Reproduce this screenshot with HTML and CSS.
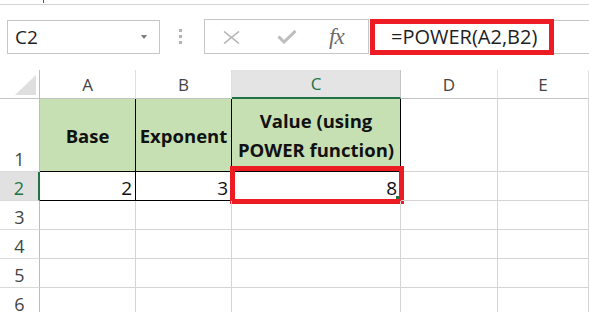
FILE: index.html
```html
<!DOCTYPE html>
<html lang="en">

<head>
    <meta charset="UTF-8">
    <meta name="viewport" content="width=device-width, initial-scale=1.0">
    <title>POWER function</title>
    <link rel="stylesheet" href="styles.css">
</head>

<body>
    <div class="app">
        <div class="top-strip"><span class="tick"></span></div>

        <div class="toolbar">
            <div class="name-box">
                <span class="name">C2</span>
                <span class="caret"></span>
            </div>
            <div class="grip"><i></i><i></i><i></i></div>
            <div class="fx-buttons">
                <svg class="btn-cancel" width="17" height="13" viewBox="0 0 17 13">
                    <path d="M1 0.5 L16 12.5 M16 0.5 L1 12.5" stroke="#b4b4b4" stroke-width="1.6" fill="none" />
                </svg>
                <svg class="btn-enter" width="20" height="14" viewBox="0 0 20 14">
                    <path d="M1.5 6.5 L7 12 L18.5 1" stroke="#bcbcbc" stroke-width="3" fill="none" />
                </svg>
                <span class="fx">fx</span>
            </div>
            <div class="formula">=POWER(A2,B2)</div>
            <div class="formula-rest"></div>
        </div>

        <div class="sheet">
            <!-- header row -->
            <div class="cell corner">
                <svg width="40" height="28" viewBox="0 0 40 28">
                    <polygon points="15,25 36,25 36,5" fill="#dfdfdf" />
                </svg>
            </div>
            <div class="cell col-head">A</div>
            <div class="cell col-head">B</div>
            <div class="cell col-head active">C</div>
            <div class="cell col-head">D</div>
            <div class="cell col-head">E</div>

            <!-- row 1 -->
            <div class="cell row-head">1</div>
            <div class="cell title boxed">Base</div>
            <div class="cell title boxed">Exponent</div>
            <div class="cell title boxed">Value (using POWER function)</div>
            <div class="cell"></div>
            <div class="cell"></div>

            <!-- row 2 -->
            <div class="cell row-head active">2</div>
            <div class="cell num boxed">2</div>
            <div class="cell num boxed">3</div>
            <div class="cell num boxed selected">8
                <span class="mark"></span>
                <span class="handle"></span>
            </div>
            <div class="cell"></div>
            <div class="cell"></div>

            <!-- rows 3-6 -->
            <div class="cell row-head">3</div>
            <div class="cell"></div>
            <div class="cell"></div>
            <div class="cell"></div>
            <div class="cell"></div>
            <div class="cell"></div>

            <div class="cell row-head">4</div>
            <div class="cell"></div>
            <div class="cell"></div>
            <div class="cell"></div>
            <div class="cell"></div>
            <div class="cell"></div>

            <div class="cell row-head">5</div>
            <div class="cell"></div>
            <div class="cell"></div>
            <div class="cell"></div>
            <div class="cell"></div>
            <div class="cell"></div>

            <div class="cell row-head">6</div>
            <div class="cell"></div>
            <div class="cell"></div>
            <div class="cell"></div>
            <div class="cell"></div>
            <div class="cell"></div>
        </div>
    </div>
</body>

</html>
```

FILE: styles.css
```css
body {
    margin: 0px;
    background-color: white;
    font-family: "Open Sans", "Noto Sans", sans-serif;
    color: #1f1f1f;
}

.app {
    width: 589px;
    height: 312px;
    overflow: hidden;
}

/* remains of the ribbon above */
.top-strip {
    height: 4px;
    border-bottom: 1px solid #d5d5d5;
    padding-left: 43px;
}

.top-strip .tick {
    display: block;
    width: 1px;
    height: 3px;
    background-color: #555;
}

/* name box + formula bar */
.toolbar {
    display: flex;
    align-items: flex-start;
    margin-top: 14px;
    height: 36px;
}

.name-box {
    display: flex;
    align-items: center;
    justify-content: space-between;
    box-sizing: border-box;
    width: 153px;
    height: 34px;
    margin-top: 1px;
    margin-left: 7px;
    padding: 0px 12px 0px 7px;
    border: 1px solid #c6c6c6;
}

.name-box .name {
    font-size: 19px;
    color: #1f1f1f;
}

.name-box .caret {
    width: 0px;
    height: 0px;
    border-left: 3px solid transparent;
    border-right: 3px solid transparent;
    border-top: 4px solid #7a7a7a;
}

.grip {
    display: flex;
    flex-direction: column;
    gap: 3px;
    margin: 10px 22px 0px 19px;
}

.grip i {
    display: block;
    width: 3px;
    height: 3px;
    background-color: #b4b4b4;
}

.fx-buttons {
    display: flex;
    align-items: center;
    box-sizing: border-box;
    width: 165px;
    height: 35px;
    border: 1px solid #c6c6c6;
    padding-left: 18px;
}

.btn-cancel {
    margin-top: 1px;
}

.btn-enter {
    margin-left: 37px;
    margin-top: 1px;
}

.fx {
    margin-left: 32px;
    font-family: "Liberation Serif", "DejaVu Serif", serif;
    font-style: italic;
    font-size: 23px;
    color: #6b6b6b;
    letter-spacing: -1px;
}

.formula {
    box-sizing: border-box;
    width: 184px;
    height: 36px;
    margin-left: 1px;
    padding-left: 16px;
    border: 5px solid #ed1c24;
    font-size: 20px;
    line-height: 25px;
    color: #1f1f1f;
    white-space: nowrap;
}

.formula-rest {
    flex: 1;
    height: 34px;
    margin-top: 1px;
    box-sizing: border-box;
    border-top: 1px solid #c6c6c6;
    border-bottom: 1px solid #c6c6c6;
}

/* grid */
.sheet {
    display: grid;
    grid-template-columns: 40px 96px 96px 169px 97px 91px;
    grid-template-rows: 29px 73px 29px 29px 29px 29px 29px;
    margin-top: 15px;
}

.cell {
    position: relative;
    box-sizing: border-box;
    border-right: 1px solid #d4d4d4;
    border-bottom: 1px solid #d4d4d4;
}

.corner {
    border-right: 1px solid #bdbdbd;
    border-bottom: 1px solid #c4c4c4;
}

.corner svg {
    display: block;
}

.col-head {
    display: flex;
    align-items: center;
    justify-content: center;
    border-right: 1px solid #e0e0e0;
    border-bottom: 1px solid #c4c4c4;
    font-size: 17px;
    color: #444;
}

.col-head.active {
    background-color: #e4e4e4;
    border-right-color: #c4c4c4;
    border-bottom: 2px solid #217346;
    color: #217346;
}

.row-head {
    display: flex;
    align-items: flex-end;
    justify-content: center;
    border-right: 1px solid #bdbdbd;
    border-bottom: 1px solid #dadada;
    font-size: 18px;
    line-height: 24px;
    color: #444;
}

.row-head.active {
    background-color: #e1e1e1;
    border-right: 2px solid #217346;
    color: #217346;
}

.title {
    display: flex;
    align-items: center;
    justify-content: center;
    padding: 0px 3px;
    background-color: #c6e0b4;
    font-weight: bold;
    font-size: 18.5px;
    line-height: 29px;
    text-align: center;
    color: #111;
}

.boxed {
    border-right: 1px solid #000;
    border-bottom: 1px solid #000;
}

.num {
    display: flex;
    align-items: flex-end;
    justify-content: flex-end;
    padding-right: 3px;
    font-size: 19px;
    line-height: 24px;
    color: #111;
}

/* red annotation around C2 */
.selected .mark {
    position: absolute;
    left: -2px;
    top: -6px;
    width: 174px;
    height: 38px;
    box-sizing: border-box;
    border: 5px solid #ed1c24;
}

.selected .handle {
    position: absolute;
    right: 1px;
    bottom: 1px;
    width: 3px;
    height: 3px;
    background-color: #217346;
}
```
